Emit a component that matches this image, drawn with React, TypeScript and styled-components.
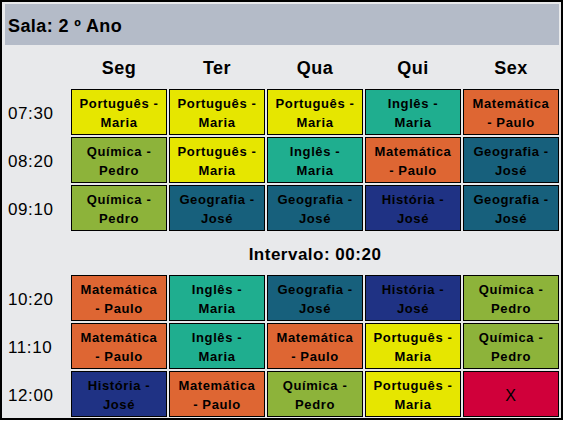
import React from "react";
import styled, { createGlobalStyle } from "styled-components";

type Subject = "pt" | "mat" | "qui" | "ing" | "geo" | "his" | "none";

const COLORS: Record<Subject, string> = {
    pt: "#e6e600",
    mat: "#de6633",
    qui: "#8db33a",
    ing: "#1fae8f",
    geo: "#17607c",
    his: "#1f3284",
    none: "#d0003a",
};

const LABELS: Record<Subject, [string, string]> = {
    pt: ["Português -", "Maria"],
    mat: ["Matemática", "- Paulo"],
    qui: ["Química -", "Pedro"],
    ing: ["Inglês -", "Maria"],
    geo: ["Geografia -", "José"],
    his: ["História -", "José"],
    none: ["X", ""],
};

const DAYS = ["Seg", "Ter", "Qua", "Qui", "Sex"];

const MORNING: { time: string; slots: Subject[] }[] = [
    { time: "07:30", slots: ["pt", "pt", "pt", "ing", "mat"] },
    { time: "08:20", slots: ["qui", "pt", "ing", "mat", "geo"] },
    { time: "09:10", slots: ["qui", "geo", "geo", "his", "geo"] },
];

const LATE: { time: string; slots: Subject[] }[] = [
    { time: "10:20", slots: ["mat", "ing", "geo", "his", "qui"] },
    { time: "11:10", slots: ["mat", "ing", "mat", "pt", "qui"] },
    { time: "12:00", slots: ["his", "mat", "qui", "pt", "none"] },
];

const GlobalStyle = createGlobalStyle`
    body {
        margin: 0;
        background: #ffffff;
        font-family: "Liberation Sans", Arial, sans-serif;
    }
`;

const Frame = styled.div`
    width: 563px;
    height: 420px;
    box-sizing: border-box;
    border: 2px solid #000;
    padding: 2px 2px 1px 3px;
    background: #e8e9eb;
`;

const Title = styled.div`
    height: 41px;
    box-sizing: border-box;
    background: #b4bbc8;
    display: flex;
    align-items: center;
    padding: 3px 0 0 3px;
    font-size: 18px;
    font-weight: bold;
    letter-spacing: 0.4px;
    color: #000;
`;

const Grid = styled.div`
    display: grid;
    grid-template-columns: 64px repeat(5, 96px);
    grid-template-rows: 42px 46px 46px 46px 40px 46px 46px 46px;
    column-gap: 2px;
    row-gap: 2px;
`;

const DayHead = styled.div`
    display: flex;
    align-items: center;
    justify-content: center;
    padding-top: 5px;
    font-size: 18px;
    font-weight: bold;
    letter-spacing: 0.5px;
`;

const TimeLabel = styled.div`
    display: flex;
    align-items: center;
    padding: 4px 0 0 3px;
    font-size: 17px;
    letter-spacing: 0.6px;
`;

const Slot = styled.div<{ $bg: string }>`
    box-sizing: border-box;
    border: 1px solid #000;
    background: ${props => props.$bg};
    display: flex;
    flex-direction: column;
    align-items: center;
    justify-content: center;
    padding-top: 2px;
    font-size: 13px;
    font-weight: bold;
    line-height: 19px;
    letter-spacing: 0.6px;
    color: #000;
`;

const Empty = styled.span`
    font-weight: normal;
    font-size: 16px;
`;

const Break = styled.div`
    grid-column: 2 / span 5;
    display: flex;
    align-items: center;
    justify-content: center;
    padding-top: 3px;
    font-size: 17px;
    font-weight: bold;
    letter-spacing: 0.5px;
`;

const Row = ({ time, slots }: { time: string; slots: Subject[] }) => (
    <>
        <TimeLabel>{time}</TimeLabel>
        {slots.map((s, i) => (
            <Slot key={i} $bg={COLORS[s]}>
                {s === "none" ? (
                    <Empty>X</Empty>
                ) : (
                    <>
                        <span>{LABELS[s][0]}</span>
                        <span>{LABELS[s][1]}</span>
                    </>
                )}
            </Slot>
        ))}
    </>
);

const App = () => {
    return (
        <>
            <GlobalStyle />
            <Frame>
                <Title>Sala: 2 º Ano</Title>
                <Grid>
                    <div />
                    {DAYS.map(d => <DayHead key={d}>{d}</DayHead>)}
                    {MORNING.map(r => <Row key={r.time} {...r} />)}
                    <div />
                    <Break>Intervalo: 00:20</Break>
                    {LATE.map(r => <Row key={r.time} {...r} />)}
                </Grid>
            </Frame>
        </>
    );
};

export default App;
